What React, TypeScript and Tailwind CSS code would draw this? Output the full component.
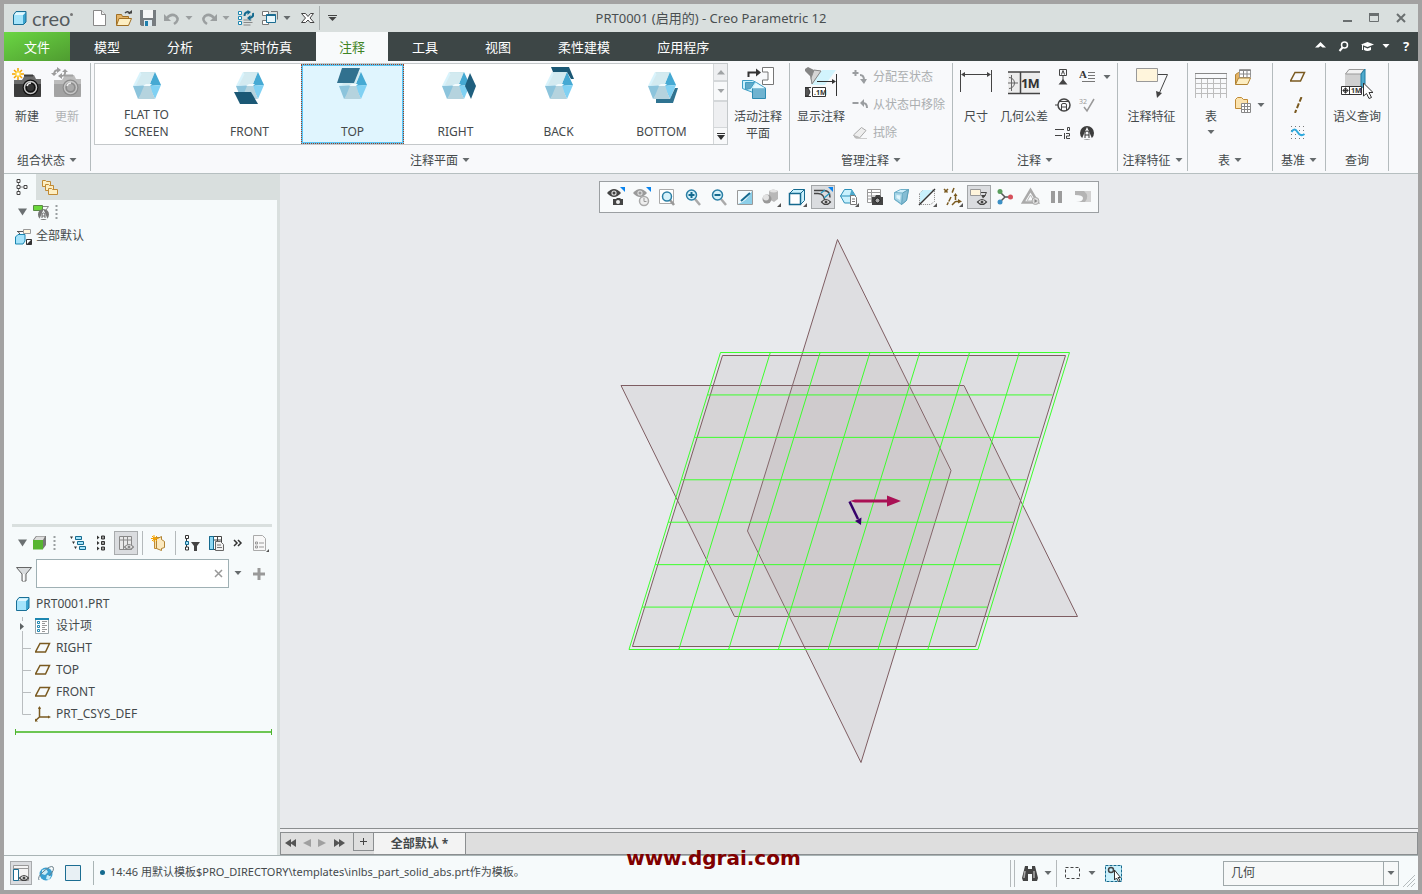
import { ReactNode } from "react";

type BoxProps = { w: number; h: number; children: ReactNode; className?: string };

const Svg = ({ w, h, children, className }: BoxProps) => (
  <svg
    width={w}
    height={h}
    viewBox={`0 0 ${w} ${h}`}
    fill="none"
    aria-hidden="true"
    className={className ?? "shrink-0"}
  >
    {children}
  </svg>
);

const Caret = ({ color = "#666b6d" }: { color?: string }) => (
  <Svg w={8} h={5}>
    <path d="M.500 0h7L4 4z" fill={color} />
  </Svg>
);

/* ---------- shared glyphs ---------- */

const BlueCube = ({ size = 16 }: { size?: number }) => (
  <svg width={size} height={size} viewBox="0 0 16 16" fill="none" aria-hidden="true" className="shrink-0">
    <path d="M1 4.500 3.500 2H14v10l-2.500 2.500H1z" fill="#a5e4fb" />
    <path d="M11 5 14 2v10l-3 3z" fill="#3ba4cf" />
    <path d="M1.500 5 4 2.500h9.500L11 5z" fill="#e3f7fe" />
    <path d="M1.500 5 4 1.500h10v10.500L11.500 14.500h-10z" stroke="#1a6f96" />
  </svg>
);

const PlaneGlyph = () => (
  <Svg w={16} h={12}>
    <path d="M5 1.500h9.500l-4 8.500H.500z" stroke="#7a5a20" strokeWidth="1.500" />
  </Svg>
);

const Eye = ({ x, y, color = "#444" }: { x: number; y: number; color?: string }) => (
  <g transform={`translate(${x} ${y})`}>
    <path d="M-7 0Q0-8 7 0 0 8-7 0z" fill={color} />
    <circle r="2.600" fill="#ddd" />
    <circle r="1.500" fill={color} />
  </g>
);

const SmallEye = ({ x, y, color = "#444" }: { x: number; y: number; color?: string }) => (
  <g transform={`translate(${x} ${y})`}>
    <path d="M-4.500 0Q0-5 4.500 0 0 5-4.500 0z" fill="#eee" stroke={color} strokeWidth="1.200" />
    <circle r="1.500" fill={color} />
  </g>
);

const Corner = () => <path d="M20 16v4h-4z" fill="#555" />;
const BlueCorner = () => <path d="M15 0h5v5z" fill="#0a84ee" />;

const Camera = ({ dim = false }: { dim?: boolean }) => {
  const dark = dim ? "#a3a3a3" : "#3c3c3c";
  const mid = dim ? "#bcbcbc" : "#6c6c6c";
  const lens = dim ? "#8c8c8c" : "#111";
  return (
    <Svg w={32} h={32}>
      <path d="M3 13h8l3-5h9l2 4h5v18H3z" fill={mid} />
      <path d="M3 17h27v11q0 2-2 2H5q-2 0-2-2z" fill={dark} />
      <path d="M13 8.500h9" stroke={dark} strokeWidth="2" />
      <circle cx="19.500" cy="20.500" r="8" fill={lens} />
      <circle cx="19.500" cy="20.500" r="6" stroke="#c8c8c8" strokeWidth="1.500" />
      <circle cx="19.500" cy="20.500" r="3.500" fill={dim ? "#aaa" : "#333"} />
      <path d="M16 19q1-3 4-3" stroke="#eee" strokeWidth="1.500" />
      {dim ? (
        <g stroke="#9c9c9c" strokeWidth="2">
          <path d="M3 8q0-5 4-5M14 4q1 5-4 5" />
          <path d="M6 0v6l4-3zM11 6v6L7 9z" fill="#9c9c9c" stroke="none" />
          <path d="M0 6h6L3 9zM11 5h6l-3-3z" fill="#9c9c9c" stroke="none" />
        </g>
      ) : (
        <g>
          <path d="M7 1v12M1 7h12M3 3l8 8M11 3l-8 8" stroke="#f5a300" strokeWidth="1.500" />
          <circle cx="7" cy="7" r="3" fill="#ffd54a" />
          <circle cx="7" cy="7" r="1.500" fill="#fff" />
        </g>
      )}
    </Svg>
  );
};

/* ---------- title bar ---------- */

const QuickButton = ({ label, children }: { label: string; children: ReactNode }) => (
  <button type="button" aria-label={label} className="flex h-5 items-center">
    {children}
  </button>
);

const TitleBar = () => (
  <header className="grid h-7 shrink-0 grid-cols-[1fr_auto_1fr] items-center bg-[#d9dfde]">
    <div className="flex items-center">
      <div className="flex w-20 items-center gap-1">
        <span className="ml-2 flex">
          <BlueCube size={16} />
        </span>
        <span className="font-['Lato',sans-serif] text-[20px] leading-6 text-[#555b5e]">creo</span>
        <span className="-ml-1 mb-2 h-[3px] w-[3px] rounded-full bg-[#777]"></span>
      </div>
      <div className="ml-2 flex items-center gap-2">
        <QuickButton label="新建">
          <Svg w={16} h={16}>
            <path d="M1.500.500h8l4 4v11h-12z" fill="#fff" stroke="#888" />
            <path d="M9.500.500v4h4" fill="#eee" stroke="#888" />
          </Svg>
        </QuickButton>
        <QuickButton label="打开">
          <Svg w={16} h={16}>
            <path d="M.500 15V4.500h5l1 2h6V15z" fill="#e4b366" stroke="#a06f24" />
            <path d="M.500 15.500 3 8.500h12.500l-3 7z" fill="#fdeec2" stroke="#a06f24" />
            <path d="M9 3q3-3 5 1" stroke="#444" strokeWidth="1.500" />
            <path d="M11.500 3.500H16V0z" fill="#444" />
          </Svg>
        </QuickButton>
        <QuickButton label="保存">
          <Svg w={16} h={16}>
            <path d="M0 0h16v16H1.500L0 14.500z" fill="#777c80" />
            <path d="M3 0h10v8H3z" fill="#f6f6f6" />
            <path d="M4 10h8v6H4z" fill="#dfeaf0" />
            <path d="M5 11h3v5H5z" fill="#1e7fac" />
          </Svg>
        </QuickButton>
        <div className="flex items-center gap-[5px]">
          <QuickButton label="撤消">
            <Svg w={16} h={16}>
              <path d="M3 8q4-5 9-2 4 4-2 8" stroke="#9b9fa0" strokeWidth="2.500" />
              <path d="M0 4v7h7z" fill="#9b9fa0" />
            </Svg>
          </QuickButton>
          <Caret color="#9b9fa0" />
        </div>
        <div className="flex items-center gap-[5px]">
          <QuickButton label="重做">
            <Svg w={16} h={16}>
              <path d="M13 8Q9 3 4 6q-4 4 2 8" stroke="#9b9fa0" strokeWidth="2.500" />
              <path d="M16 4v7H9z" fill="#9b9fa0" />
            </Svg>
          </QuickButton>
          <Caret color="#9b9fa0" />
        </div>
        <QuickButton label="重新生成">
          <Svg w={16} h={16}>
            <path d="M.500 1.500h3v3h-3zM.500 6.500h3v3h-3zM.500 11.500h3v3h-3z" fill="#fff" stroke="#1d86b0" />
            <path d="M5.500 10h8M5.500 12.500h9M5.500 15h7" stroke="#888" />
            <path d="M6.500 6q0-4 4-4M15 3q1 4-3 5" stroke="#156a8f" strokeWidth="2" />
            <path d="M9.500 0v5L13 2zM12.500 5v6L9 8z" fill="#156a8f" />
          </Svg>
        </QuickButton>
        <div className="flex items-center gap-[5px]">
          <QuickButton label="窗口">
            <Svg w={16} h={16}>
              <path d="M.500 1.500h6v4h-6zM.500 10.500h6v4h-6z" fill="#fff" stroke="#777" />
              <path d="M9 1.500h6.500v8" stroke="#777" />
              <path d="M4.500 4.500h9v8h-9z" fill="#e8f7fc" stroke="#1c6d92" />
              <path d="M4.500 5h9" stroke="#1c6d92" strokeWidth="2" />
            </Svg>
          </QuickButton>
          <Caret />
        </div>
        <QuickButton label="关闭窗口">
          <Svg w={16} h={16}>
            <path d="M2.500 3.500h4l2.500 3 2.500-3h3L11 8l4 4.500h-4L9 10l-2.500 2.500h-4L6.500 8z" fill="#fff" stroke="#444" />
          </Svg>
        </QuickButton>
      </div>
      <span className="ml-1 h-6 w-px bg-[#a9afaf]"></span>
      <button type="button" aria-label="自定义快速访问工具栏" className="ml-2">
        <Svg w={9} h={8}>
          <path d="M0 1.500h9" stroke="#444" />
          <path d="M.500 3h8l-4 4z" fill="#444" />
        </Svg>
      </button>
    </div>
    <h1 className="text-[13px] leading-5 text-[#4a4f51]">PRT0001 (启用的) - Creo Parametric 12</h1>
    <div className="flex items-center justify-end gap-[15px] pr-[11px] text-[#6a6f70]">
      <button type="button" aria-label="最小化">
        <Svg w={12} h={12}>
          <path d="M2 9h9" stroke="currentColor" strokeWidth="2" />
        </Svg>
      </button>
      <button type="button" aria-label="最大化">
        <Svg w={12} h={12}>
          <path d="M1.500 2.500h9v7h-9z" stroke="currentColor" />
          <path d="M1 2.500h10" stroke="currentColor" strokeWidth="3" />
        </Svg>
      </button>
      <button type="button" aria-label="关闭">
        <Svg w={12} h={12}>
          <path d="m2 2 8 8M10 2l-8 8" stroke="currentColor" strokeWidth="2" />
        </Svg>
      </button>
    </div>
  </header>
);

/* ---------- ribbon tabs ---------- */

const tabs = ["模型", "分析", "实时仿真", "注释", "工具", "视图", "柔性建模", "应用程序"];

const TabBar = () => (
  <nav className="flex h-[29px] shrink-0 items-stretch gap-px bg-[#3d4646] text-[13px] leading-[30px] text-white">
    <button type="button" className="bg-linear-to-br from-[#6ad643] to-[#4f9c30] px-5">
      文件
    </button>
    {tabs.map((tab) =>
      tab === "注释" ? (
        <button key={tab} type="button" className="bg-[#f8fafb] px-[23px] text-[#3f8424]">
          {tab}
        </button>
      ) : (
        <button key={tab} type="button" className="px-[23px]">
          {tab}
        </button>
      )
    )}
    <div className="ml-auto flex items-center gap-3 pr-2">
      <button type="button" aria-label="最小化功能区">
        <Svg w={11} h={14}>
          <path d="M0 7.500 5.500 2 11 7.500H7.500L5.500 6l-2 1.500z" fill="#fff" />
        </Svg>
      </button>
      <button type="button" aria-label="搜索">
        <Svg w={11} h={14}>
          <circle cx="6.500" cy="5" r="3" stroke="#fff" strokeWidth="1.500" />
          <path d="M4.500 7.500 1.500 11" stroke="#fff" strokeWidth="2" />
        </Svg>
      </button>
      <button type="button" aria-label="学习连接器" className="flex items-center gap-2">
        <Svg w={13} h={14}>
          <path d="M0 4.500 6.500 2 13 4.500 6.500 7z" fill="#fff" />
          <path d="M3 7v3q3.500 2 7 0V7L6.500 8.500z" fill="#fff" />
          <path d="M1.500 5v5" stroke="#fff" />
        </Svg>
        <Caret color="#fff" />
      </button>
      <button type="button" className="w-2 text-[13px] font-bold leading-[27px]">
        ?
      </button>
    </div>
  </nav>
);

/* ---------- ribbon ---------- */

type GroupProps = { label: string; caret?: boolean; className: string; children: ReactNode };

const Group = ({ label, caret = true, className, children }: GroupProps) => (
  <section className={`my-[2px] flex shrink-0 flex-col border-r border-[#b4bbbd] ${className}`}>
    <div className="flex h-[87px] items-start">{children}</div>
    <button type="button" className="flex h-[21px] items-center justify-center gap-1">
      {label}
      {caret && <Caret />}
    </button>
  </section>
);

type BigProps = { label: ReactNode; className: string; disabled?: boolean; children: ReactNode };

const BigButton = ({ label, className, disabled, children }: BigProps) => (
  <button
    type="button"
    disabled={disabled}
    className={`flex shrink-0 flex-col items-center pt-1 leading-[17px] disabled:text-[#b0b3b5] ${className}`}
  >
    <span className="mb-[9px] flex h-8 items-center">{children}</span>
    <span className="whitespace-nowrap">{label}</span>
  </button>
);

const SmallButton = ({ label, children }: { label: string; children: ReactNode }) => (
  <button type="button" aria-label={label} className="flex h-7 items-center">
    {children}
  </button>
);

const flaps: Record<string, ReactNode> = {
  "FLAT TO SCREEN": null,
  FRONT: <path d="M4 26h17l7 12H10z" fill="#1b5875" />,
  TOP: <path d="M9 2h18l-6 15H4z" fill="#31718f" />,
  RIGHT: <path d="m34 7 6 13-5 13-6-13z" fill="#1f5f7e" />,
  BACK: <path d="M12 1h18l5 12h-3l-4-7H14z" fill="#1b5875" />,
  BOTTOM: <path d="M14 37h17l5-15h-3l-5 11H14z" fill="#2f7391" />,
};

const PlaneCube = ({ name }: { name: string }) => (
  <Svg w={40} h={38}>
    <path d="M13 6h15l-6 14z" fill="#cfe8ee" />
    <path d="M13 6 6 20l16-1z" fill="#d8f3fc" />
    <path d="m28 6 6 13-12 1z" fill="#45a9d3" />
    <path d="m34 19-6 14-6-13z" fill="#80d1f3" />
    <path d="M28 33H11l11-13z" fill="#b5d3de" />
    <path d="M11 33 6 20l16-1z" fill="#8cc4dc" />
    <path d="M15 7h12l-4 11-7 1-7 0z" fill="#d3eaf0" />
    <path d="m12 32 5-12 6-1 4 13z" fill="#b5d3de" />
    <path d="m16 20 3-2h6l-2 2z" fill="#f2fbfd" />
    {flaps[name]}
  </Svg>
);

const Gallery = () => (
  <div className="ml-[3px] flex h-[82px] border border-[#c4c8ca] bg-white">
    {Object.keys(flaps).map((name) => (
      <button
        key={name}
        type="button"
        aria-pressed={name === "TOP"}
        className="flex w-[103px] flex-col items-center gap-[2px] pt-[2px] aria-pressed:bg-[#e0f5fe] aria-pressed:shadow-[inset_0_0_0_2px_#5cc5f5] aria-pressed:outline aria-pressed:-outline-offset-1 aria-pressed:outline-dotted aria-pressed:outline-[#a04020]"
      >
        <PlaneCube name={name} />
        <span className="flex h-[34px] w-[60px] items-end justify-center text-center leading-[17px]">{name}</span>
      </button>
    ))}
    <div className="flex w-[14px] flex-col border-l border-[#d4d7d9] bg-[#eeeff1]">
      <button type="button" aria-label="向上滚动" className="flex h-[18px] items-center justify-center border-b-2 border-[#d4d7d9]">
        <Svg w={8} h={5}>
          <path d="M0 4.500h8L4 0z" fill="#a0a3a5" />
        </Svg>
      </button>
      <button type="button" aria-label="向下滚动" className="flex h-5 items-center justify-center border-b-2 border-[#d4d7d9] bg-[#f8f9fa]">
        <Caret color="#a0a3a5" />
      </button>
      <button type="button" aria-label="更多" className="mt-auto flex h-[17px] items-center justify-center border-t border-[#d4d7d9] bg-[#f8f9fa]">
        <Svg w={8} h={8}>
          <path d="M0 1.500h8" stroke="#333" />
          <path d="M0 3h8L4 8z" fill="#333" />
        </Svg>
      </button>
    </div>
  </div>
);

const Ribbon = () => (
  <div className="flex h-[113px] shrink-0 overflow-hidden border-b border-[#b6bfc0] bg-[#f8f9fb]">
    <Group label="组合状态" className="w-[87px]">
      <BigButton label="新建" className="ml-[3px] w-10">
        <Camera />
      </BigButton>
      <BigButton label="更新" className="w-10" disabled>
        <Camera dim />
      </BigButton>
    </Group>

    <Group label="注释平面" className="w-[699px]">
      <Gallery />
      <BigButton
        className="ml-[2px] w-14"
        label={
          <>
            活动注释
            <br />
            平面
          </>
        }
      >
        <Svg w={32} h={32}>
          <path d="M20.500.500h11v17h-11v-4.500H26V5h-5.500z" fill="#fff" stroke="#777" />
          <path d="M6.500 10V5.500H16" stroke="#333" strokeWidth="2" />
          <path d="M14 1.500v8L19 5.500z" fill="#333" />
          <path d="M.500 13.500h10l4 2 9.500 6-13 1v3L.500 21.500z" fill="#c9f1fd" stroke="#3d9dc4" />
          <path d="M3.500 15.500h9l-4 6-5 1z" fill="#5fa9c8" stroke="#3d9dc4" />
          <path d="M10.500 21.500h13v10h-13z" fill="#6fb3d0" stroke="#2d8bb2" />
          <path d="m10.500 21.500 3.500-5 9.500 5z" fill="#e6f9ff" />
        </Svg>
      </BigButton>
    </Group>

    <Group label="管理注释" className="w-[163px]">
      <BigButton label="显示注释" className="ml-1 w-[54px]">
        <Svg w={32} h={32}>
          <path d="m6 18 11-15h14L20 18z" fill="#d2f4fd" />
          <path d="M0 2 3 0l6 3 7 1L7 17 5 9 0 4z" fill="#858585" />
          <path d="m9 3 7 1L7 17 6 11z" fill="#d5d5d5" stroke="#888" />
          <path d="M12 14.500h18M31.500 7v22" stroke="#333" />
          <path d="M27 12v5l4-2.500z" fill="#333" />
          <path d="M7.500 20.500h13v9h-13z" fill="#fff" stroke="#333" />
          <path d="M0 21h3l2 4-2 4H0zM0 20.500h6M0 29.500h6" fill="#555" stroke="#333" />
          <text x="9" y="28" fontSize="7" fontWeight="bold" fill="#333">
            .1M
          </text>
        </Svg>
      </BigButton>
      <div className="ml-1 flex flex-col text-[#abaeb0]">
        <button type="button" disabled className="flex h-7 items-center gap-[5px]">
          <Svg w={16} h={16}>
            <path d="M3.500 1v6M.500 4h6M8 6q4 0 4 5" stroke="#9a9da0" strokeWidth="2" />
            <path d="M8 10h7l-3 5z" fill="#9a9da0" />
          </Svg>
          分配至状态
        </button>
        <button type="button" disabled className="flex h-7 items-center gap-[5px]">
          <Svg w={16} h={16}>
            <path d="M.500 6h6M11 6q4 0 4 5" stroke="#9a9da0" strokeWidth="2" />
            <path d="M12 2v8L8 6z" fill="#9a9da0" />
          </Svg>
          从状态中移除
        </button>
        <button type="button" disabled className="flex h-7 items-center gap-[5px]">
          <Svg w={16} h={16}>
            <path d="m1.500 10 8-7.500 4.500 3-6.500 7.500H3.500z" fill="#eee" stroke="#aaa" />
            <path d="m1.500 10 5 1.500 1 1.500H3.500z" fill="#bbb" />
            <path d="M4 13.500h11" stroke="#ccc" />
          </Svg>
          拭除
        </button>
      </div>
    </Group>

    <Group label="注释" className="w-[165px]">
      <BigButton label="尺寸" className="ml-[3px] w-10">
        <Svg w={32} h={32}>
          <path d="M.500 3v22M31.500 3v22M3 7.500h26" stroke="#444" />
          <path d="M1 7.500 5 5v5zM31 7.500 27 5v5z" fill="#444" />
        </Svg>
      </BigButton>
      <BigButton label="几何公差" className="ml-px w-[54px]">
        <Svg w={32} h={32}>
          <path d="M0 5h32v22H0z" fill="#ececec" />
          <path d="M0 5h32M0 26.500h32M12.500 5v22" stroke="#444" strokeWidth="1.500" />
          <path d="M1 10.500a5.500 5.500 0 0 1 0 11M0 16h10M3.500 8v16" stroke="#666" />
          <text x="13" y="21" fontSize="13" fontWeight="bold" fill="#333">
            1
          </text>
          <text x="20" y="21" fontSize="13" fontWeight="bold" fontFamily="Roboto, sans-serif" fill="#333">
            M
          </text>
        </Svg>
      </BigButton>
      <div className="ml-1 grid grid-cols-[16px_16px_8px] gap-x-2">
        <SmallButton label="基准特征符号">
          <Svg w={16} h={16}>
            <path d="M4.500.500h7v6h-7zM8 7v5" stroke="#444" />
            <path d="m8 10-4.500 5.500h9z" fill="#444" />
            <path d="m6.500 5.500 1.500-4 1.500 4" stroke="#444" />
          </Svg>
        </SmallButton>
        <SmallButton label="注解">
          <Svg w={16} h={16}>
            <text x="0" y="9" fontSize="11" fontWeight="bold" fontFamily="Liberation Serif, serif" fill="#333">
              A
            </text>
            <path d="M9 3.500h7M9 6.500h7M9 9.500h7M3 12.500h13" stroke="#777" />
          </Svg>
        </SmallButton>
        <button type="button" aria-label="注解选项" className="flex h-7 items-center">
          <Caret />
        </button>
        <SmallButton label="基准目标">
          <Svg w={16} h={16}>
            <circle cx="9" cy="8" r="6" stroke="#444" strokeWidth="1.500" />
            <path d="M0 8h3M4 4.500h10M6.500 13V8q0-1.500 1.500-1.500h2q1.500 0 1.500 1.500v5M6.500 10h5" stroke="#444" />
          </Svg>
        </SmallButton>
        <SmallButton label="表面粗糙度">
          <Svg w={16} h={16}>
            <text x="0" y="7" fontSize="7" fill="#999">
              32
            </text>
            <path d="m5 10 3 4 7-12" stroke="#999" strokeWidth="1.500" />
          </Svg>
        </SmallButton>
        <span></span>
        <SmallButton label="纵坐标尺寸">
          <Svg w={16} h={16}>
            <path d="M0 4.500h9M0 10.500h7M14.500 2.500v3h-2v-3z" stroke="#444" />
            <path d="M9.500 8v6M11 8.500h3.500v2.500H11.500v2.500H15" stroke="#444" />
          </Svg>
        </SmallButton>
        <SmallButton label="自定义符号">
          <Svg w={16} h={16}>
            <circle cx="8" cy="8" r="7" fill="#3d3d3d" />
            <path d="M8 2 13.500 14.500h-11z" fill="#f8f9fb" />
            <path d="M6 13V8q0-2 2-2t2 2v5M6 10h4" stroke="#333" />
          </Svg>
        </SmallButton>
      </div>
    </Group>

    <Group label="注释特征" className="w-[70px]">
      <BigButton label="注释特征" className="w-full pr-[2px]">
        <Svg w={32} h={32}>
          <path d="M.500 1.500h21v13h-21z" fill="#fff5dc" stroke="#999" />
          <path d="M22 7.500h9.500L22.500 28" stroke="#444" />
          <path d="m20 24 6 2-5 5z" fill="#444" />
        </Svg>
      </BigButton>
    </Group>

    <Group label="表" className="w-[85px]">
      <BigButton
        className="ml-1 w-[38px]"
        label={
          <span className="flex flex-col items-center">
            表
            <span className="mt-[5px] flex">
              <Caret />
            </span>
          </span>
        }
      >
        <Svg w={32} h={32}>
          <path d="M.500 6v25M6.500 11v20M12.500 11v20M18.500 11v20M25.500 11v20M31.500 6v25M0 16.500h32M0 21.500h32M0 26.500h32" stroke="#bdbdbd" />
          <path d="M0 6.500h32M0 11.500h32" stroke="#888" />
        </Svg>
      </BigButton>
      <div className="ml-[5px] grid grid-cols-[16px_8px] gap-x-[6px]">
        <SmallButton label="来自文件的表">
          <Svg w={16} h={16}>
            <path d="M.500 15V5.500l3-2h8v11z" fill="#e4b366" stroke="#b18332" />
            <path d="M4.500.500h11v8h-11z" fill="#fff" stroke="#999" />
            <path d="M4 1.500h12M8.500 1v7M12 1v7M5 5h11" stroke="#888" />
            <path d="m.500 15.500 3-6.500h12l-3 6.500z" fill="#fdeec2" stroke="#b18332" />
          </Svg>
        </SmallButton>
        <span></span>
        <SmallButton label="快速表">
          <Svg w={16} h={16}>
            <path d="M.500 11.500v-9l2-2h4l2 2h4v9z" fill="#fbe3ae" stroke="#c08a35" />
            <path d="M6.500 6.500h9v9h-9z" fill="#fff" stroke="#888" />
            <path d="M6 9.500h10M6 12.500h10M9.500 6v10M12.500 6v10" stroke="#888" />
          </Svg>
        </SmallButton>
        <button type="button" aria-label="快速表选项" className="flex h-7 items-center">
          <Caret />
        </button>
      </div>
    </Group>

    <Group label="基准" className="w-[53px]">
      <div className="ml-[17px] flex flex-col">
        <SmallButton label="平面">
          <PlaneGlyph />
        </SmallButton>
        <SmallButton label="轴">
          <Svg w={16} h={16}>
            <path d="M11.500 0 5 16" stroke="#7a5a20" strokeWidth="2" strokeDasharray="5 2" />
          </Svg>
        </SmallButton>
        <SmallButton label="曲线">
          <Svg w={16} h={16}>
            <path d="M1 1.500h15M1 5.500h15M1 9.500h15M1 13.500h15" stroke="#777" strokeDasharray="1 3" />
            <path d="M1.500 7q3-5 6 0t7 2" stroke="#2fa9dd" strokeWidth="2" />
          </Svg>
        </SmallButton>
      </div>
    </Group>

    <Group label="查询" caret={false} className="w-[63px]">
      <BigButton label="语义查询" className="w-full">
        <Svg w={32} h={32}>
          <path d="M4 7 8 2h16v15l-4 5H4z" fill="#d0d0d0" />
          <path d="M4.500 7 8 2.500h15L20 7z" fill="#f1f1f1" stroke="#999" />
          <path d="m20 7 4-5v15l-4 5z" fill="#4fa9cb" stroke="#1d7da4" />
          <path d="M.500 19.500h20v8H.500zM8.500 19.500v8" fill="#fff" stroke="#333" />
          <circle cx="4.500" cy="23.500" r="2" stroke="#333" />
          <path d="M4.500 20.500v6M1.500 23.500h6" stroke="#333" />
          <text x="10" y="26" fontSize="7" fontWeight="bold" fill="#333">
            1M
          </text>
          <path d="M22.500 16v13l3-2.500 2.500 5 2.500-1-2.500-5h4z" fill="#fff" stroke="#333" />
        </Svg>
      </BigButton>
    </Group>
  </div>
);

/* ---------- left panel ---------- */

const TreeTriangle = () => (
  <Svg w={9} h={8}>
    <path d="M0 .500h9L4.500 7.500z" fill="#6b7072" />
  </Svg>
);

const Grip = () => (
  <Svg w={3} h={16}>
    <path d="M1.500 1v15" stroke="#9a9fa1" strokeWidth="2" strokeDasharray="2 2" />
  </Svg>
);

const features = [
  { name: "设计项", kind: "items" },
  { name: "RIGHT", kind: "plane" },
  { name: "TOP", kind: "plane" },
  { name: "FRONT", kind: "plane" },
  { name: "PRT_CSYS_DEF", kind: "csys" },
];

const FeatureIcon = ({ kind }: { kind: string }) => {
  if (kind === "plane") return <PlaneGlyph />;
  if (kind === "csys")
    return (
      <Svg w={16} h={16}>
        <path d="M4.500 1v10H14M4.500 11 0 15" stroke="#7a5a20" strokeWidth="1.500" />
        <path d="M3 3 4.500 0 6 3zM13 9.500l3 1.500-3 1.500zM-1 15.500v-4l4 4z" fill="#7a5a20" />
      </Svg>
    );
  return (
    <Svg w={16} h={16}>
      <path d="M.500.500h13v15H.500z" fill="#fff" stroke="#9aa4a8" />
      <path d="M0 1h14" stroke="#1d86b0" strokeWidth="2" />
      <path d="M2.500 3.500h2v2h-2zM2.500 7.500h2v2h-2zM2.500 11.500h2v2h-2z" stroke="#1d86b0" />
      <path d="M7 3.500h5M7 5.500h3M7 7.500h5M7 9.500h3M7 11.500h5M7 13.500h3" stroke="#999" />
    </Svg>
  );
};

const Connector = ({ kind }: { kind: string }) => (
  <Svg w={20} h={22}>
    {kind === "items" ? (
      <>
        <path d="M7.500 2v4M7.500 16v6" stroke="#b9bdbf" />
        <path d="M5 8v7l4-3.500z" fill="#5d6264" />
      </>
    ) : (
      <path d={kind === "csys" ? "M7.500 0v11.500H16" : "M7.500 0v22M7.500 11.500H16"} stroke="#b9bdbf" />
    )}
  </Svg>
);

const SidePanel = () => (
  <aside className="flex w-[276px] shrink-0 flex-col border-r-[3px] border-[#d9dfde] bg-[#f6fafb]">
    <div className="flex h-[26px] shrink-0 bg-[#d9dfde]">
      <button type="button" aria-label="模型树" className="flex w-8 items-center justify-center bg-[#f6fafb] pl-1">
        <Svg w={12} h={16}>
          <path d="M2.500 2v12M2.500 8h6" stroke="#888" />
          <path d="M1 .500h3v3H1zM1 6.500h3v3H1zM1 12.500h3v3H1zM8 6.500h3v3H8z" fill="#fff" stroke="#444" />
        </Svg>
      </button>
      <button type="button" aria-label="层树" className="flex w-8 items-center justify-center pr-1">
        <Svg w={18} h={16}>
          <path d="M1.500 1.500h3l1 1h4v5h-8z" fill="#fdeec2" stroke="#c08a35" />
          <path d="M4.500 5.500h3l1 1h4v5h-8z" fill="#fdeec2" stroke="#c08a35" />
          <path d="M7.500 9.500h3l1 1h5v5h-9z" fill="#fdeec2" stroke="#c08a35" />
        </Svg>
      </button>
    </div>
    <div className="flex h-6 shrink-0 items-center gap-[6px] pl-[14px]">
      <button type="button" aria-label="折叠">
        <TreeTriangle />
      </button>
      <Svg w={16} h={16}>
        <path d="M.500 1.500h9v5h-9z" fill="#6bd83c" stroke="#5a8a45" />
        <path d="M10 2.500h5.500L13 6" stroke="#888" />
        <circle cx="10.500" cy="10.500" r="5.500" fill="#777" />
        <path d="M10.500 5.500 14.500 15h-8z" fill="#f6fafb" />
        <path d="M9 14v-3q0-2 1.500-2t1.500 2v3M9 12h3" stroke="#666" />
      </Svg>
      <Grip />
    </div>
    <button type="button" className="flex h-6 shrink-0 items-center gap-1 pl-[11px]">
      <Svg w={17} h={17}>
        <path d="M2 3.500h6M3 3.500l3 4" stroke="#555" />
        <path d="M8.500 1.500h7v4h-7z" fill="#fff5dc" stroke="#999" />
        <path d="M.500 9 3 6.500h7V13l-2 3H.500z" fill="#a5e4fb" stroke="#1a86b0" />
        <path d="M11.500 11.500h5v5h-5z" fill="#333" stroke="#333" />
        <path d="M12 12h4l-4 4z" fill="#fff" />
      </Svg>
      全部默认
    </button>

    <div className="min-h-0 flex-1"></div>

    <div className="h-[331px] shrink-0">
      <div className="ml-2 mr-[5px] h-[3px] bg-[#d9dfde]"></div>
      <div className="flex h-8 items-center pl-[14px]">
        <button type="button" aria-label="折叠模型树">
          <TreeTriangle />
        </button>
        <span className="ml-[6px] flex">
          <Svg w={14} h={14}>
            <path d="M0 4 3 0h10v9l-3 4H0z" fill="#777" />
            <path d="m1 4 2.500-3.500H12L10 4z" fill="#ddd" />
            <path d="M0 4h10v9.500H0z" fill="#58b532" />
          </Svg>
        </span>
        <span className="ml-[6px] flex">
          <Grip />
        </span>
        <button type="button" aria-label="全部展开" className="ml-[14px]">
          <Svg w={16} h={16}>
            <path d="M0 1.500h3L1.500 4zM2 6.500h3L3.500 9zM4 11.500h3L5.500 14z" fill="#333" />
            <path d="M5.500 1.500h6v3h-6zM7.500 6.500h6v3h-6zM9.500 11.500h6v3h-6z" fill="#a5e4fb" stroke="#156a8f" />
          </Svg>
        </button>
        <button type="button" aria-label="全部折叠" className="ml-2">
          <Svg w={14} h={16}>
            <path d="M3 .500v4l2.500-2zM3 6v4l2.500-2zM3 11.500v4l2.500-2z" fill="#333" />
            <path d="M7.500 1h3v3h-3zM7.500 6.500h3v3h-3zM7.500 12h3v3h-3z" fill="#999" stroke="#333" />
          </Svg>
        </button>
        <button type="button" aria-label="树列" className="ml-[6px] flex h-6 w-6 items-center justify-center border border-[#a8abad] bg-[#dadcdf]">
          <Svg w={16} h={16}>
            <path d="M1.500 1.500h12v13h-12zM1 5h13M5.500 1v13M9.500 1v13" fill="#e8e8e8" stroke="#888" />
            <SmallEye x={11} y={12} color="#888" />
          </Svg>
        </button>
        <span className="ml-1 h-6 w-px bg-[#b4b9bb]"></span>
        <button type="button" aria-label="新建组" className="ml-2">
          <Svg w={15} h={16}>
            <path d="M3.500 2.500h7v11h-7z" fill="#f9dfa5" stroke="#c08a35" />
            <path d="m5.500 4 5-2.500v3l3 2v6l-3 1v2l-5-2z" fill="#fbe9bf" stroke="#b18332" />
            <path d="M3 0v7M0 3.500h7M1 1l5 5M6 1 1 6" stroke="#f5a300" />
          </Svg>
        </button>
        <span className="ml-[9px] h-6 w-px bg-[#b4b9bb]"></span>
        <button type="button" aria-label="树过滤器" className="ml-2">
          <Svg w={16} h={16}>
            <path d="M2.500 2v12" stroke="#333" />
            <path d="M1.500.500h3v3h-3zM1.500 12h3v3h-3z" fill="#fff" stroke="#333" />
            <path d="M1.500 6.500h3v3h-3z" fill="#a5e4fb" stroke="#156a8f" />
            <path d="M7 7h9l-3 4v5h-3v-5z" fill="#444" />
          </Svg>
        </button>
        <button type="button" aria-label="树列设置" className="ml-2">
          <Svg w={16} h={16}>
            <path d="M1.500 1.500h12v13h-12zM1 5h13M9.500 1v13" fill="#fff" stroke="#444" />
            <path d="M1.500 1.500h4v13h-4z" fill="#8ed9f5" stroke="#156a8f" />
            <path d="M7.500 6.500h5l3 3v6h-8z" fill="#f2f2f2" stroke="#666" />
            <path d="M9 10h4M9 12.500h5" stroke="#777" />
          </Svg>
        </button>
        <button type="button" aria-label="更多工具" className="ml-[9px]">
          <Svg w={10} h={8}>
            <path d="m1 1 3 3-3 3M5 1l3 3-3 3" stroke="#333" strokeWidth="1.500" />
          </Svg>
        </button>
        <button type="button" aria-label="设置" className="ml-[10px]">
          <Svg w={18} h={20}>
            <path d="M.500 2.500h9l3 3v12H.500z" fill="#f8f8f8" stroke="#aaa" />
            <path d="M2.500 9h2v2h-2zM2.500 13h2v2h-2zM6 10h5M6 14h5" stroke="#999" />
            <path d="M16 16v3h-3z" fill="#555" />
          </Svg>
        </button>
      </div>
      <div className="flex h-[29px] items-center pl-3">
        <Svg w={16} h={16}>
          <path d="M.500 1.500h15L10 8v7H6V8z" fill="#d9dcde" stroke="#666" />
          <path d="M7 8h1.500v7H7z" fill="#fff" />
        </Svg>
        <div className="ml-1 flex h-[29px] w-[193px] items-center border border-[#9fb0b4] bg-white">
          <input type="text" aria-label="过滤模型树" className="min-w-0 flex-1 px-1 outline-none" />
          <button type="button" aria-label="清除" className="mr-[5px]">
            <Svg w={9} h={9}>
              <path d="m1 1 7 7M8 1 1 8" stroke="#999" strokeWidth="1.500" />
            </Svg>
          </button>
        </div>
        <button type="button" aria-label="搜索选项" className="ml-[5px]">
          <Caret />
        </button>
        <button type="button" aria-label="添加" className="ml-[11px]">
          <Svg w={12} h={12}>
            <path d="M6 0v12M0 6h12" stroke="#999" strokeWidth="3" />
          </Svg>
        </button>
      </div>
      <div className="mt-[5px] flex h-[22px] items-center gap-[5px] pl-[11px]">
        <BlueCube />
        PRT0001.PRT
      </div>
      <ul className="pl-[11px]">
        {features.map((feature) => (
          <li key={feature.name} className="flex h-[22px] items-center">
            <Connector kind={feature.kind} />
            <FeatureIcon kind={feature.kind} />
            <span className="ml-[5px]">{feature.name}</span>
          </li>
        ))}
      </ul>
      <div className="ml-[11px] mr-[5px] mt-1 flex h-[6px] items-center border-x border-[#4eb52e]">
        <span className="h-[2px] w-full bg-[#6dc653]"></span>
      </div>
    </div>
  </aside>
);

/* ---------- graphics toolbar ---------- */

const viewTools: { label: string; pressed?: boolean; icon: ReactNode }[] = [
  {
    label: "外观",
    icon: (
      <>
        <Eye x={9} y={6} />
        <path d="M8 12h3l1-1h3l1 1h2v6H8z" fill="#444" />
        <circle cx="13" cy="15" r="2" fill="#eee" />
        <BlueCorner />
      </>
    ),
  },
  {
    label: "历史视图",
    icon: (
      <>
        <Eye x={9} y={6} color="#9a9a9a" />
        <circle cx="13" cy="14" r="4.500" fill="#eee" stroke="#aaa" strokeWidth="1.500" />
        <path d="M13 11v3.500h2.500" stroke="#999" />
        <BlueCorner />
      </>
    ),
  },
  {
    label: "重新调整",
    icon: (
      <>
        <path d="M2.500 2.500h14v14h-14z" fill="#fff" stroke="#aaa" />
        <path d="m13 13 4 5" stroke="#999" strokeWidth="2.500" />
        <circle cx="10" cy="9.500" r="4.500" fill="#d6f2fb" stroke="#2a7fa5" strokeWidth="1.500" />
      </>
    ),
  },
  {
    label: "放大",
    icon: (
      <>
        <path d="m12 12 5 6" stroke="#aaa" strokeWidth="2.500" />
        <circle cx="8.500" cy="8" r="5" fill="#d6f2fb" stroke="#2a7fa5" strokeWidth="1.500" />
        <path d="M5.500 8h6M8.500 5v6" stroke="#156a8f" strokeWidth="2" />
      </>
    ),
  },
  {
    label: "缩小",
    icon: (
      <>
        <path d="m12 12 5 6" stroke="#aaa" strokeWidth="2.500" />
        <circle cx="8.500" cy="8" r="5" fill="#d6f2fb" stroke="#2a7fa5" strokeWidth="1.500" />
        <path d="M5.500 8h6" stroke="#156a8f" strokeWidth="2" />
      </>
    ),
  },
  {
    label: "重画",
    icon: (
      <>
        <path d="M2.500 3.500h15v14h-15z" fill="#f4fbfe" stroke="#999" />
        <path d="M17 4v13H3q8-2 14-13z" fill="#8ccfe9" />
        <path d="m6 14 9-8" stroke="#156a8f" strokeWidth="2" />
      </>
    ),
  },
  {
    label: "渲染选项",
    icon: (
      <>
        <path d="M8 4q4-3 9 0v8l-4 3-5-3z" fill="#b8b8b8" />
        <path d="M8 4q4-3 9 0-4 3-9 0z" fill="#e2e2e2" />
        <circle cx="6" cy="12" r="4.500" fill="#999" />
        <circle cx="5" cy="10.500" r="3" fill="#e2e2e2" />
        <Corner />
      </>
    ),
  },
  {
    label: "显示样式",
    icon: (
      <>
        <path d="m2.500 6.500 4-4h11v11l-4 4h-11z" fill="#c9f1fd" stroke="#156a8f" />
        <path d="M2.500 6.500h11v11h-11z" fill="#fff" stroke="#156a8f" strokeWidth="1.500" />
        <path d="m13.500 6.500 4-4" stroke="#156a8f" />
        <Corner />
      </>
    ),
  },
  {
    label: "透视图",
    pressed: true,
    icon: (
      <>
        <path d="M1 3.500h10q6 0 6 7M1 6.500h4q7 0 7 10" stroke="#444" strokeWidth="1.500" />
        <path d="m8 6 4-3M11 11l6-5" stroke="#2f9cc2" strokeWidth="1.500" />
        <SmallEye x={13} y={15} />
        <BlueCorner />
      </>
    ),
  },
  {
    label: "已保存方向",
    icon: (
      <>
        <path d="m1.500 9 4-6.500h7L16.500 9l-4 7h-7z" fill="#c9f1fd" stroke="#2a8fb8" />
        <path d="M1.500 9h15" stroke="#2a8fb8" />
        <path d="m12.500 2.500 4 6.500h-6z" fill="#4ca9cc" />
        <path d="M11.500 8.500h4l2 2v7h-6z" fill="#fff" stroke="#777" />
        <path d="M13 12h3M13 14.500h3" stroke="#777" />
        <Corner />
      </>
    ),
  },
  {
    label: "视图管理器",
    icon: (
      <>
        <path d="M2.500 2.500h13v13h-13zM2 5.500h14M2 9h14M2 12h14M6.500 2v13" fill="#fff" stroke="#999" />
        <path d="M7 10h3l1-2h4l1 2h2v8H7z" fill="#444" />
        <circle cx="12.500" cy="13.500" r="2.500" fill="#aaa" stroke="#222" />
      </>
    ),
  },
  {
    label: "截面",
    icon: (
      <>
        <path d="m3.500 5.500 6-3 8 0-2 11-5 4-7-5z" fill="#cfeefa" stroke="#6fb0c9" />
        <path d="m11.500 6 6-3.500-2 11-5 4z" fill="#85bdd4" stroke="#5b9fb9" />
        <path d="M3.500 5.500 11.500 6l-1 11-7-5z" fill="#a8d6e8" stroke="#6fb0c9" />
        <path d="m5.500 8 4 .500-.500 4.500-3.500-2z" fill="#dff5fc" />
      </>
    ),
  },
  {
    label: "注释方向",
    icon: (
      <>
        <path d="M2.500 6.500 5.500 3.500h9l3-1v12l-4 3h-11z" stroke="#888" strokeDasharray="1 1" />
        <path d="M3 6 6 3h10L3 16z" fill="#c9f1fd" />
        <path d="M2 18 18 2" stroke="#333" strokeWidth="1.500" />
        <Corner />
      </>
    ),
  },
  {
    label: "基准显示过滤器",
    icon: (
      <>
        <path
          d="m1 2 4 4M5 2 1 6M11 1 9 6M8 10l-4 8M12.500 8v6.500H18M12.500 14.500 9 18"
          stroke="#7a5a20"
          strokeWidth="1.500"
          strokeDasharray="5 1"
        />
        <path d="m12.500 6 2 3h-4zM15 12l4 2.500-4 2z" fill="#7a5a20" />
        <Corner />
      </>
    ),
  },
  {
    label: "注释显示",
    pressed: true,
    icon: (
      <>
        <path d="M1.500 2.500h10v6h-10z" fill="#fff5dc" stroke="#999" />
        <path d="M12 5.500h5.500L15 10" stroke="#444" />
        <path d="M12 8h5l-3 3.500z" fill="#444" />
        <SmallEye x={13} y={15} />
      </>
    ),
  },
  {
    label: "旋转中心",
    icon: (
      <>
        <path d="m5 5 5 5h5M10 10l-5 5" stroke="#555" strokeWidth="1.500" />
        <circle cx="5" cy="4.500" r="2.500" fill="#5a9e5c" />
        <circle cx="15.500" cy="10" r="2.500" fill="#d6505b" />
        <circle cx="5" cy="15" r="2.500" fill="#3b8fc4" />
      </>
    ),
  },
  {
    label: "仿真",
    icon: (
      <>
        <path d="m9.500 3 7.500 12.500H2z" stroke="#aaa" strokeWidth="2.500" />
        <path d="m9.500 8 3.500 6H6z" stroke="#bbb" />
        <circle cx="14.500" cy="14" r="3.500" fill="#ddd" stroke="#aaa" />
        <path d="M13.500 12v4l3-2z" fill="#888" />
      </>
    ),
  },
  {
    label: "暂停",
    icon: <path d="M4 4h4v12H4zM11 4h4v12h-4z" fill="#9c9c9c" />,
  },
  {
    label: "停止仿真",
    icon: (
      <>
        <path d="M2 4h16v11H3q7 0 7-4 0-3-8-3z" fill="#b4b4b4" />
        <path d="M11 4h7v11h-6q5-6-1-11z" fill="#d2d2d2" />
      </>
    ),
  },
];

const ViewToolbar = () => (
  <div className="mt-[7px] flex h-8 shrink-0 items-center gap-[2px] border border-[#9b9fa2] bg-[#f8fafb] px-[3px]">
    {viewTools.map((tool) => (
      <button
        key={tool.label}
        type="button"
        aria-label={tool.label}
        aria-pressed={tool.pressed ?? false}
        className="flex h-6 w-6 items-center justify-center border border-transparent aria-pressed:border-[#a3a6a8] aria-pressed:bg-[#dadcdf]"
      >
        <Svg w={20} h={20}>{tool.icon}</Svg>
      </button>
    ))}
  </div>
);

/* ---------- datum planes ---------- */

// inner lines of the 7 x 7 grid on the TOP plane
const steps = [1, 2, 3, 4, 5, 6];

const DatumScene = () => (
  <Svg w={500} h={560} className="mt-2 shrink-0">
    <g transform="translate(-599 -221)">
      <g fill="#a08f8f" fillOpacity=".12" stroke="#7e5d62">
        <path d="M837.500 239.500 951 470.500 861 762.500 747.500 531z" />
        <path d="M621 385.500h343L1077.500 616.500h-343z" />
        <path d="M722.500 355.500h343L975.500 646.500h-343z" />
      </g>
      <g stroke="#3cff2c">
        <path d="M720.500 352.500h349L978 649.500H629z" />
        {steps.map((i) => (
          <path key={`c${i}`} d={`M${720.5 + i * 49.8} 352.500 ${629 + i * 49.8} 649.500`} />
        ))}
        {steps.map((i) => (
          <path key={`r${i}`} d={`M${720.5 - i * 13.07} ${352.5 + i * 42.43}h345`} />
        ))}
      </g>
      <path d="m850 501 5-1.500h32v-4l14 5.500-14 5.500v-4h-32z" fill="#aa1155" />
      <path d="M849.500 501.500 858 519" stroke="#36006a" strokeWidth="2.500" />
      <path d="m861 525-6-4 6.500-3.500z" fill="#36006a" />
    </g>
  </Svg>
);

const SheetTabs = () => (
  <div className="h-[27px] shrink-0 border-t border-[#8b8e90] bg-[#f0f0f2] pt-[3px]">
    <div className="flex h-[23px] border border-[#8b8e90] bg-[#dedede]">
      <div className="flex items-center gap-[6px] pb-[2px] pl-1 text-[#555]">
        <button type="button" aria-label="第一个">
          <Svg w={11} h={8}>
            <path d="M6 0v8L0 4zM11 0v8L5 4z" fill="currentColor" />
          </Svg>
        </button>
        <button type="button" aria-label="上一个" disabled className="ml-px">
          <Svg w={8} h={8}>
            <path d="M8 0v8L0 4z" fill="#a0a0a0" />
          </Svg>
        </button>
        <button type="button" aria-label="下一个" disabled>
          <Svg w={10} h={8}>
            <path d="M1 0v8l8-4z" fill="#a0a0a0" />
          </Svg>
        </button>
        <button type="button" aria-label="最后一个" className="ml-px">
          <Svg w={11} h={8}>
            <path d="M0 0v8l6-4zM5 0v8l6-4z" fill="currentColor" />
          </Svg>
        </button>
      </div>
      <button type="button" aria-label="添加组合状态" className="ml-2 flex h-[18px] w-[21px] items-center justify-center border-x border-b border-[#8b8e90]">
        <Svg w={7} h={7}>
          <path d="M3.500 0v7M0 3.500h7" stroke="#444" />
        </Svg>
      </button>
      <button type="button" className="w-[92px] border-r border-[#8b8e90] bg-[#f3f3f3] font-bold leading-5">
        全部默认 *
      </button>
    </div>
  </div>
);

/* ---------- status bar ---------- */

const StatusBar = () => (
  <footer className="flex h-[35px] shrink-0 items-center border-t border-[#a9b4b5] bg-[#f6fafb]">
    <button type="button" aria-label="切换导航区域" className="ml-[6px] flex h-6 w-[22px] items-center justify-center border border-[#a8abad] bg-[#dadcdf]">
      <Svg w={16} h={17}>
        <path d="M.500.500h15v15H.500z" fill="#f4f4f4" stroke="#999" />
        <path d="M0 3.500h16" stroke="#999" />
        <path d="M.500 4.500h5v11h-5z" fill="#fff" stroke="#1c6d92" />
        <SmallEye x={11} y={13} />
      </Svg>
    </button>
    <button type="button" aria-label="浏览器" className="ml-[6px]">
      <Svg w={17} h={17}>
        <circle cx="8" cy="9" r="6.500" fill="#3a9fd0" />
        <path d="m4 5 4-1 2 3-3 3-3-1zM9 10l4 1-2 4-3-1z" fill="#c9ecf8" />
        <path d="M1 15Q-1 12 6 6t9-4q2 3-4 9" stroke="#6b7f8a" />
      </Svg>
    </button>
    <button type="button" aria-label="全屏" className="ml-[10px]">
      <Svg w={16} h={16}>
        <path d="M.500.500h15v15H.500z" fill="#e8f0f4" stroke="#1c6d92" />
      </Svg>
    </button>
    <span className="ml-3 h-6 w-px bg-[#a9b4b5]"></span>
    <p className="ml-[6px] flex items-center gap-[5px] whitespace-nowrap pb-px text-[11px]">
      <span className="h-[5px] w-[5px] rounded-full bg-[#156a8f]"></span>
      14:46 用默认模板$PRO_DIRECTORY\templates\inlbs_part_solid_abs.prt作为模板。
    </p>
    <div className="ml-auto flex h-full items-center">
      <span className="h-[27px] w-[5px] border-x border-[#b4b9bb]"></span>
      <button type="button" aria-label="查找" className="ml-[7px] flex items-center gap-[6px]">
        <Svg w={16} h={16}>
          <path d="M3 1h3v3h4V1h3l3 12-1 3h-5V9H6v7H1l-1-3z" fill="#444" />
          <path d="M3 6 2 13M12 6v7" stroke="#aaa" strokeWidth="1.500" />
        </Svg>
        <Caret />
      </button>
      <span className="ml-1 h-[27px] w-px bg-[#b4b9bb]"></span>
      <button type="button" aria-label="选择框" className="ml-2 flex items-center gap-2">
        <Svg w={15} h={12}>
          <path d="M.500.500h14v11H.500z" stroke="#444" strokeDasharray="3 2" />
        </Svg>
        <Caret />
      </button>
      <button type="button" aria-label="选择模式" className="ml-[9px]">
        <Svg w={17} h={17}>
          <path d="M.500.500h16v16H.500z" fill="#c9f1fd" stroke="#156a8f" strokeDasharray="3 1" />
          <circle cx="6" cy="5" r="2.500" stroke="#444" strokeWidth="1.500" />
          <path d="M9.500 5v10l2-2 2 3.500 1.500-1-2-3h2.500z" fill="#fff" stroke="#333" />
        </Svg>
      </button>
      <div className="ml-[101px] grid h-[25px] w-[176px] items-stretch border border-[#9fa8aa] bg-[#f6f8f8]">
        <select aria-label="选择过滤器" className="col-start-1 row-start-1 appearance-none pl-[7px] outline-none">
          <option>几何</option>
        </select>
        <span className="pointer-events-none col-start-1 row-start-1 flex w-[15px] items-center justify-center justify-self-end border-l border-[#9fa8aa]">
          <Caret />
        </span>
      </div>
      <Svg w={12} h={12} className="mb-[3px] ml-1 mr-[3px] shrink-0 self-end">
        <path d="M0 12 12 0M4 12l8-8M8 12l4-4" stroke="#b5bcbe" />
      </Svg>
    </div>
  </footer>
);

const App = () => {
  return (
    <div className="relative flex h-screen min-h-[640px] flex-col overflow-hidden border-4 border-[#a3a2a2] bg-[#f6fafb] font-['Noto_Sans','Noto_Sans_CJK_SC',sans-serif] text-[12px] text-[#44494b]">
      <TitleBar />
      <TabBar />
      <Ribbon />
      <div className="flex min-h-0 flex-1">
        <SidePanel />
        <div className="flex min-w-0 flex-1 flex-col">
          <main className="flex min-h-0 flex-1 flex-col items-center overflow-hidden bg-[#e8eaed]">
            <ViewToolbar />
            <DatumScene />
          </main>
          <SheetTabs />
        </div>
      </div>
      <StatusBar />
      <p className="pointer-events-none absolute bottom-5 left-[44%] font-['DejaVu_Sans',sans-serif] text-[20px] font-bold leading-6 text-[#800000]">
        www.dgrai.com
      </p>
    </div>
  );
};

export default App;
